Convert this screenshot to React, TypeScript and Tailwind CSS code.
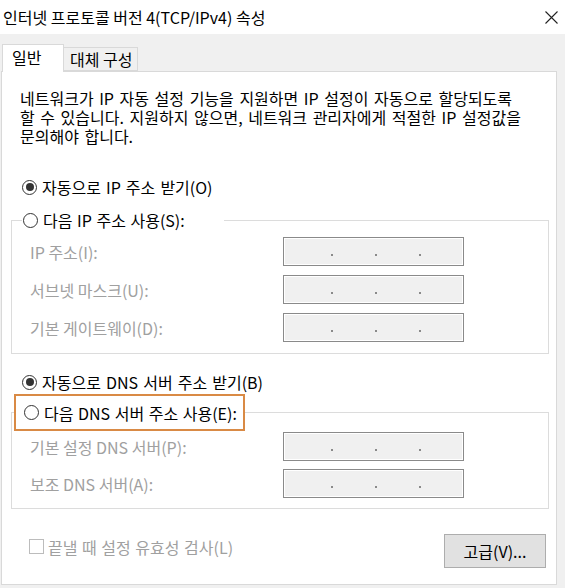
import React from "react";

const FONT = { fontFamily: '"Noto Sans CJK KR", "Noto Sans", sans-serif' };

const Radio = ({ checked }: { checked?: boolean }) => (
  <span className="flex h-[15px] w-[15px] shrink-0 items-center justify-center rounded-full border border-[#333333] bg-white">
    {checked && <span className="h-[8px] w-[8px] rounded-full bg-[#333333]" />}
  </span>
);

const IpBox = () => (
  <div className="flex h-[29px] w-[181px] items-center border border-[#8a8a8a] bg-[#f0f0f0] pl-[47px] pt-[6px] shadow-[inset_0_0_0_1px_#ffffff]">
    <span className="h-[2px] w-[2px] bg-[#8a8a8a]" />
    <span className="ml-[42px] h-[2px] w-[2px] bg-[#8a8a8a]" />
    <span className="ml-[42px] h-[2px] w-[2px] bg-[#8a8a8a]" />
  </div>
);

const FieldRow = ({ label }: { label: string }) => (
  <div className="flex items-center pl-[18px]">
    <span className="w-[253px] text-[16px] leading-[18px] text-[#a0a0a0]">{label}</span>
    <IpBox />
  </div>
);

export default function App() {
  return (
    <div className="h-[588px] w-[565px] overflow-hidden bg-[#f0f0f0] text-black" style={FONT}>
      {/* title bar */}
      <div className="flex h-[34px] items-center justify-between bg-white pl-[3px] pr-[7px]">
        <span className="text-[16px] leading-[20px]">인터넷 프로토콜 버전 4(TCP/IPv4) 속성</span>
        <svg width="13" height="13" viewBox="0 0 13 13">
          <path d="M0.5 0.5L12.5 12.5M12.5 0.5L0.5 12.5" stroke="#222" strokeWidth="1.1" fill="none" />
        </svg>
      </div>

      {/* tabs */}
      <div className="flex items-end pl-[2px] pt-[10px]">
        <div className="relative z-10 -mb-px flex h-[28px] w-[62px] items-start border border-b-0 border-[#d9d9d9] bg-white pl-[9px] pt-[3px] text-[16px] leading-[19px]">
          일반
        </div>
        <div className="flex h-[24px] w-[74px] items-center border border-l-0 border-[#d9d9d9] bg-[#f0f0f0] pl-[6px] text-[16px] leading-[19px]">
          대체 구성
        </div>
      </div>

      {/* panel */}
      <div className="ml-[1px] h-[514px] w-[556px] border border-[#d9d9d9] bg-white pl-[9px] pr-[7px]">
        <div className="flex flex-col pl-[9px] pt-[17px] text-[16px] leading-[19px] [word-spacing:2px]">
          <span className="h-[19px]">네트워크가 IP 자동 설정 기능을 지원하면 IP 설정이 자동으로 할당되도록</span>
          <span className="h-[19px]">할 수 있습니다. 지원하지 않으면, 네트워크 관리자에게 적절한 IP 설정값을</span>
          <span className="h-[19px]">문의해야 합니다.</span>
        </div>

        <div className="mt-[32px] flex h-[18px] items-center gap-[5px] pl-[11px] text-[16px] leading-[18px] [word-spacing:1.5px]">
          <Radio checked />
          <span>자동으로 IP 주소 받기(O)</span>
        </div>

        <fieldset className="mt-[15px] border border-[#dcdcdc] pb-[11px]">
          <legend className="ml-[10px] w-[202px] pl-[1px]">
            <span className="flex h-[18px] items-center gap-[5px] text-[16px] leading-[18px] [word-spacing:1px]">
              <Radio />
              <span>다음 IP 주소 사용(S):</span>
            </span>
          </legend>
          <div className="flex flex-col gap-[9px] pt-[8px]">
            <FieldRow label="IP 주소(I):" />
            <FieldRow label="서브넷 마스크(U):" />
            <FieldRow label="기본 게이트웨이(D):" />
          </div>
        </fieldset>

        <div className="mt-[19px] flex h-[18px] items-center gap-[5px] pl-[11px] text-[16px] leading-[18px] [word-spacing:1.5px]">
          <Radio checked />
          <span>자동으로 DNS 서버 주소 받기(B)</span>
        </div>

        <fieldset className="mt-[3px] border border-[#dcdcdc] pb-[10px]">
          <legend className="ml-[2px] w-[231px] border-2 border-[#d98a45] pl-[8px]">
            <span className="flex h-[33px] items-center gap-[5px] text-[16px] leading-[18px] [word-spacing:1px]">
              <Radio />
              <span>다음 DNS 서버 주소 사용(E):</span>
            </span>
          </legend>
          <div className="flex flex-col gap-[8px] pt-[1px]">
            <FieldRow label="기본 설정 DNS 서버(P):" />
            <FieldRow label="보조 DNS 서버(A):" />
          </div>
        </fieldset>

        <div className="mt-[25px] flex items-start justify-between pl-[18px] pr-[3px]">
          <div className="mt-[5px] flex h-[15px] items-center gap-[4px]">
            <span className="h-[15px] w-[15px] border border-[#bcbcbc] bg-white" />
            <span className="text-[16px] leading-[18px] text-[#a0a0a0] [word-spacing:1px]">끝낼 때 설정 유효성 검사(L)</span>
          </div>
          <button className="h-[34px] w-[102px] border border-[#adadad] bg-[#e1e1e1] text-[16px] leading-[18px] text-black">
            고급(V)...
          </button>
        </div>
      </div>
    </div>
  );
}
